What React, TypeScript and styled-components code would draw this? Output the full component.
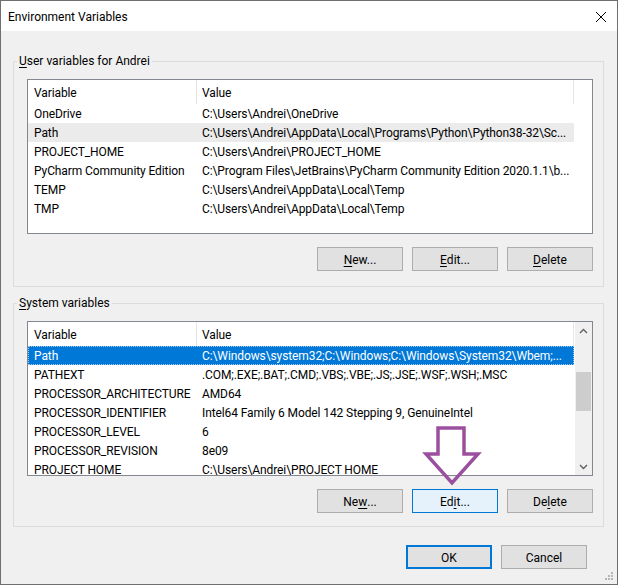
import React from "react"
import styled, { createGlobalStyle, css } from "styled-components"

const GlobalStyle = createGlobalStyle`
  html, body {
    margin: 0;
    padding: 0;
    background: #ffffff;
  }
  body {
    font-family: Roboto, "Liberation Sans", Arial, sans-serif;
    font-size: 12px;
    color: #000000;
  }
`

const Window = styled.div`
  width: 618px;
  height: 585px;
  box-sizing: border-box;
  border: 1px solid #6f6f6f;
  display: flex;
  flex-direction: column;
  position: relative;
  background: #f0f0f0;
`

const TitleBar = styled.div`
  height: 30px;
  box-sizing: border-box;
  background: #ffffff;
  display: flex;
  align-items: center;
  justify-content: space-between;
  padding: 2px 10px 0 7px;
`

const Title = styled.span`
  font-size: 12px;
  line-height: 16px;
`

const Body = styled.div`
  flex: 1;
  display: flex;
  flex-direction: column;
  padding: 22px 13px 0 12px;
`

const Group = styled.fieldset<{ $gap?: number }>`
  margin: ${({ $gap }) => $gap || 0}px 0 0 0;
  padding: 0;
  min-width: 0;
  border: 1px solid #dcdcdc;
  width: 591px;
  box-sizing: border-box;
`

const Legend = styled.legend`
  margin-left: 3px;
  padding: 0 2px;
  line-height: 16px;
`

const GroupInner = styled.div<{ $bottom: number }>`
  padding: 10px 10px ${({ $bottom }) => $bottom}px 13px;
  display: flex;
  flex-direction: column;
`

const ListView = styled.div`
  height: 155px;
  box-sizing: border-box;
  border: 1px solid #828790;
  background: #ffffff;
  display: flex;
  overflow: hidden;
  letter-spacing: -0.1px;
`

const ListContent = styled.div`
  width: 546px;
  display: flex;
  flex-direction: column;
`

const Columns = styled.div`
  display: grid;
  grid-template-columns: 169px 377px;
`

const HeaderCell = styled.div<{ $first?: boolean }>`
  height: 24px;
  line-height: 26px;
  overflow: hidden;
  border-right: 1px solid #e5e5e5;
  padding-left: ${({ $first }) => ($first ? 6 : 5)}px;
  box-sizing: border-box;
`

const Row = styled.div<{ $state?: "hover" | "selected" }>`
  display: grid;
  grid-template-columns: 169px 377px;
  height: 19px;
  padding-top: 2px;
  line-height: 17px;
  box-sizing: border-box;
  ${({ $state }) =>
    $state === "hover" &&
    css`
      background: #ebebeb;
    `}
  ${({ $state }) =>
    $state === "selected" &&
    css`
      background: #0078d7;
      color: #ffffff;
      outline: 1px dotted #9fc8ef;
      outline-offset: -1px;
    `}
`

const Cell = styled.div<{ $first?: boolean }>`
  padding-left: ${({ $first }) => ($first ? 6 : 5)}px;
  white-space: nowrap;
  overflow: hidden;
`

const ScrollBar = styled.div`
  width: 17px;
  margin-left: auto;
  background: #f0f0f0;
  display: flex;
  flex-direction: column;
`

const ScrollArrow = styled.div`
  height: 17px;
  display: flex;
  align-items: center;
  justify-content: center;
`

const ScrollTrack = styled.div`
  flex: 1;
  padding: 0 1px;
`

const Thumb = styled.div`
  height: 39px;
  background: #cdcdcd;
`

const ButtonRow = styled.div<{ $top: number }>`
  display: flex;
  justify-content: flex-end;
  gap: 9px;
  margin-top: ${({ $top }) => $top}px;
`

const Button = styled.div<{ $kind?: "focused" | "default" }>`
  width: 86px;
  height: 24px;
  box-sizing: border-box;
  border: 1px solid #adadad;
  background: #e1e1e1;
  display: flex;
  align-items: center;
  justify-content: center;
  padding-top: 1px;
  ${({ $kind }) =>
    $kind === "focused" &&
    css`
      border-color: #0078d7;
      background: #e5f1fb;
    `}
  ${({ $kind }) =>
    $kind === "default" &&
    css`
      border: 2px solid #0078d7;
    `}
`

const Key = styled.span`
  text-decoration: underline;
  text-underline-offset: 2px;
`

const Footer = styled.div`
  display: flex;
  justify-content: flex-end;
  gap: 9px;
  margin-top: 18px;
  padding-right: 17px;
`

const Arrow = styled.svg`
  position: absolute;
  left: 420px;
  top: 424px;
`

const Grip = styled.svg`
  position: absolute;
  right: 3px;
  bottom: 3px;
`

const Close = () => (
  <svg width="12" height="12" viewBox="0 0 12 12">
    <path d="M1 1 L11 11 M11 1 L1 11" stroke="#000" strokeWidth="1" fill="none" />
  </svg>
)

const Chevron = ({ up }: { up?: boolean }) => (
  <svg width="9" height="6" viewBox="0 0 9 6">
    <path
      d={up ? "M1 5 L4.5 1.5 L8 5" : "M1 1 L4.5 4.5 L8 1"}
      stroke="#606060"
      strokeWidth="1.4"
      fill="none"
    />
  </svg>
)

type Item = [string, string]

const userVars: Item[] = [
  ["OneDrive", "C:\\Users\\Andrei\\OneDrive"],
  ["Path", "C:\\Users\\Andrei\\AppData\\Local\\Programs\\Python\\Python38-32\\Sc..."],
  ["PROJECT_HOME", "C:\\Users\\Andrei\\PROJECT_HOME"],
  ["PyCharm Community Edition", "C:\\Program Files\\JetBrains\\PyCharm Community Edition 2020.1.1\\b..."],
  ["TEMP", "C:\\Users\\Andrei\\AppData\\Local\\Temp"],
  ["TMP", "C:\\Users\\Andrei\\AppData\\Local\\Temp"]
]

const systemVars: Item[] = [
  ["Path", "C:\\Windows\\system32;C:\\Windows;C:\\Windows\\System32\\Wbem;..."],
  ["PATHEXT", ".COM;.EXE;.BAT;.CMD;.VBS;.VBE;.JS;.JSE;.WSF;.WSH;.MSC"],
  ["PROCESSOR_ARCHITECTURE", "AMD64"],
  ["PROCESSOR_IDENTIFIER", "Intel64 Family 6 Model 142 Stepping 9, GenuineIntel"],
  ["PROCESSOR_LEVEL", "6"],
  ["PROCESSOR_REVISION", "8e09"],
  ["PROJECT HOME", "C:\\Users\\Andrei\\PROJECT HOME"]
]

const VarList = ({
  items,
  hover,
  selected,
  scroll
}: {
  items: Item[]
  hover?: number
  selected?: number
  scroll?: boolean
}) => (
  <ListView>
    <ListContent>
      <Columns>
        <HeaderCell $first>Variable</HeaderCell>
        <HeaderCell>Value</HeaderCell>
      </Columns>
      {items.map(([name, value], i) => (
        <Row key={name} $state={i === selected ? "selected" : i === hover ? "hover" : undefined}>
          <Cell $first>{name}</Cell>
          <Cell>{value}</Cell>
        </Row>
      ))}
    </ListContent>
    {scroll && (
      <ScrollBar>
        <ScrollArrow>
          <Chevron up />
        </ScrollArrow>
        <ScrollTrack>
          <Thumb style={{ marginTop: 33 }} />
        </ScrollTrack>
        <ScrollArrow>
          <Chevron />
        </ScrollArrow>
      </ScrollBar>
    )}
  </ListView>
)

export default function App() {
  return (
    <>
      <GlobalStyle />
      <Window>
        <TitleBar>
          <Title>Environment Variables</Title>
          <Close />
        </TitleBar>
        <Body>
          <Group>
            <Legend>
              <Key>U</Key>ser variables for Andrei
            </Legend>
            <GroupInner $bottom={15}>
              <VarList items={userVars} hover={1} />
              <ButtonRow $top={13}>
                <Button>
                  <Key>N</Key>ew...
                </Button>
                <Button>
                  <Key>E</Key>dit...
                </Button>
                <Button>
                  <Key>D</Key>elete
                </Button>
              </ButtonRow>
            </GroupInner>
          </Group>
          <Group $gap={8}>
            <Legend>
              <Key>S</Key>ystem variables
            </Legend>
            <GroupInner $bottom={13}>
              <VarList items={systemVars} selected={0} scroll />
              <ButtonRow $top={13}>
                <Button>
                  Ne<Key>w</Key>...
                </Button>
                <Button $kind="focused">
                  Ed<Key>i</Key>t...
                </Button>
                <Button>
                  De<Key>l</Key>ete
                </Button>
              </ButtonRow>
            </GroupInner>
          </Group>
          <Footer>
            <Button $kind="default">OK</Button>
            <Button>Cancel</Button>
          </Footer>
        </Body>
        <Arrow width="62" height="64" viewBox="0 0 62 64">
          <path
            d="M17 3 H43 V29 H57 L31 58 L5 29 H17 Z"
            fill="none"
            stroke="#9b4f9f"
            strokeWidth="3.5"
            strokeLinejoin="miter"
          />
        </Arrow>
        <Grip width="10" height="10" viewBox="0 0 10 10">
          <g fill="#b5b5b5">
            <rect x="7" y="1" width="2" height="2" />
            <rect x="4" y="4" width="2" height="2" />
            <rect x="7" y="4" width="2" height="2" />
            <rect x="1" y="7" width="2" height="2" />
            <rect x="4" y="7" width="2" height="2" />
            <rect x="7" y="7" width="2" height="2" />
          </g>
        </Grip>
      </Window>
    </>
  )
}
